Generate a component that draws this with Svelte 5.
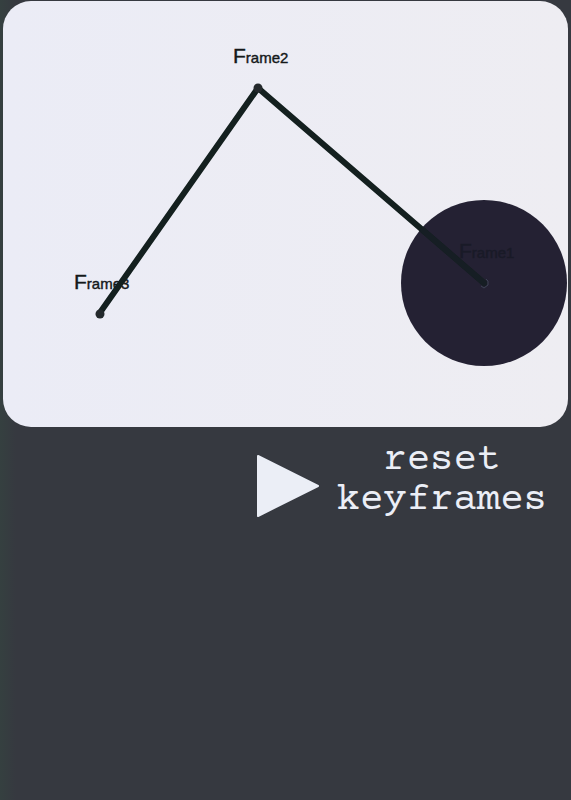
<script>
  let playing = $state(false);
  const frames = [
    { name: 'rame1', x: 456, y: 257, shade: '#191a27' },
    { name: 'rame2', x: 230, y: 62, shade: '#141819' },
    { name: 'rame3', x: 71, y: 288, shade: '#141819' }
  ];
</script>

<main>
  <svg class="stage" viewBox="0 0 565 426" role="img" aria-label="Keyframe path">
    <defs>
      <clipPath id="ball"><circle cx="481" cy="282" r="83" /></clipPath>
    </defs>
    <circle cx="481" cy="282" r="83" fill="#242133" />
    {#each frames as f}
      <text x={f.x} y={f.y} fill={f.shade} stroke={f.shade}><tspan class="cap">F</tspan>{f.name}</text>
    {/each}
    <polyline class="path" points="481,282 255,87 96,313" />
    <polyline class="path inner" points="481,282 255,87" clip-path="url(#ball)" />
    <circle cx="255" cy="87" r="4.5" fill="#24292c" />
    <circle cx="97" cy="313" r="4.5" fill="#24292c" />
    <path d="M478 285l3 2 4-3v-4l-2-2" fill="none" stroke="#3c4354" stroke-width="1" />
  </svg>

  <div class="controls">
    <button class="play" aria-label="Play" aria-pressed={playing} onclick={() => (playing = !playing)}>
      <svg viewBox="0 0 64 64" width="64" height="64" aria-hidden="true">
        <path d="M2 2L62 32L2 62Z" fill="#ebeef6" stroke="#ebeef6" stroke-width="2" stroke-linejoin="round" />
      </svg>
    </button>
    <button class="reset">reset<br />keyframes</button>
  </div>
</main>

<style>
  :global(body) {
    background: #363940;
  }
  main {
    box-sizing: border-box;
    min-height: 100vh;
    padding: 1px 3px;
    background: linear-gradient(90deg, #354040 0, #363940 16px);
  }
  .stage {
    display: block;
    width: 100%;
    border-radius: 28px;
    background: linear-gradient(90deg, #ebecf6, #eeedf2);
  }
  .stage text {
    font: 15px 'Liberation Sans', sans-serif;
    stroke-width: 0.4px;
  }
  .cap {
    font-size: 21px;
  }
  .path {
    fill: none;
    stroke: #14201f;
    stroke-width: 6;
    stroke-linecap: round;
    stroke-linejoin: round;
  }
  .inner {
    stroke: #161e24;
  }
  .controls {
    display: grid;
    grid-template-columns: 1fr auto 1fr;
    align-items: center;
    padding-top: 14px;
  }
  button {
    padding: 0;
    border: 0;
    background: none;
    color: #ebeef6;
    cursor: pointer;
  }
  .play {
    display: flex;
    grid-column: 2;
    padding: 10px 0 0 4px;
  }
  .reset {
    padding-right: 4px;
    font: 39px/40px 'Courier Prime', 'Courier 10 Pitch', 'Liberation Mono', monospace;
    text-align: center;
  }
</style>
